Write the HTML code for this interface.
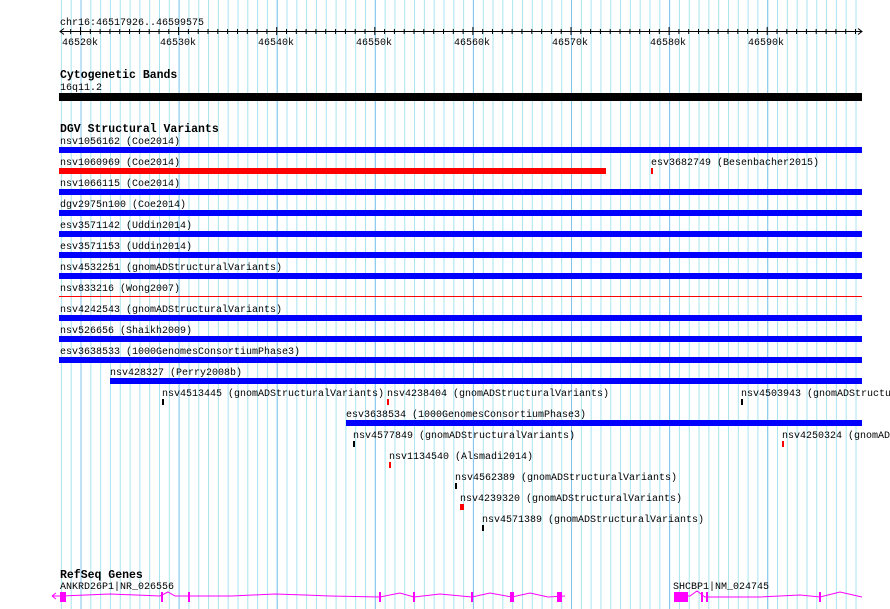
<!DOCTYPE html>
<html><head><meta charset="utf-8"><style>
html,body{margin:0;padding:0;background:#fff;width:890px;height:609px;overflow:hidden}
svg text{font-family:"Liberation Mono","DejaVu Sans Mono",monospace;font-size:10px;fill:#000}
svg text.h{font-weight:bold;font-size:11.5px}
</style></head><body>
<svg width="890" height="609" viewBox="0 0 890 609" xmlns="http://www.w3.org/2000/svg">
<defs>
<pattern id="mn" x="60.9" y="0" width="9.81" height="609" patternUnits="userSpaceOnUse">
<rect x="0" y="0" width="1" height="609" fill="#a8e4f0"/>
</pattern>
<pattern id="mj" x="80.5" y="0" width="98.1" height="609" patternUnits="userSpaceOnUse">
<rect x="0" y="0" width="1" height="609" fill="#80c4ec"/>
</pattern>
</defs>
<rect x="59" y="0" width="800" height="609" fill="url(#mn)"/>
<rect x="59" y="0" width="800" height="609" fill="url(#mj)"/>

<!-- ruler -->
<text x="60" y="25">chr16:46517926..46599575</text>
<line x1="60" y1="31.5" x2="862" y2="31.5" stroke="#000"/>
<path d="M64 28.5 L60 31.5 L64 34.5 M858 28.5 L862 31.5 L858 34.5" stroke="#000" fill="none"/>
<g stroke="#000">
<path d="M70.7 29v5M90.3 29v5M100.1 29v5M109.9 29v5M119.7 29v5M129.5 29v5M139.4 29v5M149.2 29v5M159 29v5M168.8 29v5M188.4 29v5M198.2 29v5M208 29v5M217.8 29v5M227.6 29v5M237.5 29v5M247.3 29v5M257.1 29v5M266.9 29v5M286.5 29v5M296.3 29v5M306.1 29v5M315.9 29v5M325.7 29v5M335.6 29v5M345.4 29v5M355.2 29v5M365 29v5M384.6 29v5M394.4 29v5M404.2 29v5M414 29v5M423.8 29v5M433.7 29v5M443.5 29v5M453.3 29v5M463.1 29v5M482.7 29v5M492.5 29v5M502.3 29v5M512.1 29v5M521.9 29v5M531.8 29v5M541.6 29v5M551.4 29v5M561.2 29v5M580.8 29v5M590.6 29v5M600.4 29v5M610.2 29v5M620 29v5M629.9 29v5M639.7 29v5M649.5 29v5M659.3 29v5M678.9 29v5M688.7 29v5M698.5 29v5M708.3 29v5M718.1 29v5M728 29v5M737.8 29v5M747.6 29v5M757.4 29v5M777 29v5M786.8 29v5M796.6 29v5M806.4 29v5M816.2 29v5M826.1 29v5M835.9 29v5M845.7 29v5M855.5 29v5"/>
<path d="M80.5 27v8M178.6 27v8M276.7 27v8M374.8 27v8M472.9 27v8M571 27v8M669.1 27v8M767.2 27v8"/>
</g>
<text x="62" y="45">46520k</text><text x="160" y="45">46530k</text><text x="258" y="45">46540k</text><text x="356" y="45">46550k</text><text x="454" y="45">46560k</text><text x="552" y="45">46570k</text><text x="650" y="45">46580k</text><text x="748" y="45">46590k</text>

<!-- cytobands -->
<text class="h" x="60" y="78">Cytogenetic Bands</text>
<text x="60" y="90">16q11.2</text>
<rect x="59" y="93" width="803" height="8" fill="#000"/>

<!-- DGV -->
<text class="h" x="60" y="132">DGV Structural Variants</text>
<text x="60" y="144">nsv1056162 (Coe2014)</text><rect x="59" y="147" width="803" height="6" fill="#0000ff"/>
<text x="60" y="165">nsv1060969 (Coe2014)</text><rect x="59" y="168" width="547" height="6" fill="#ff0000"/>
<text x="651" y="165">esv3682749 (Besenbacher2015)</text><rect x="651" y="168" width="2" height="6" fill="#ff0000"/>
<text x="60" y="186">nsv1066115 (Coe2014)</text><rect x="59" y="189" width="803" height="6" fill="#0000ff"/>
<text x="60" y="207">dgv2975n100 (Coe2014)</text><rect x="59" y="210" width="803" height="6" fill="#0000ff"/>
<text x="60" y="228">esv3571142 (Uddin2014)</text><rect x="59" y="231" width="803" height="6" fill="#0000ff"/>
<text x="60" y="249">esv3571153 (Uddin2014)</text><rect x="59" y="252" width="803" height="6" fill="#0000ff"/>
<text x="60" y="270">nsv4532251 (gnomADStructuralVariants)</text><rect x="59" y="273" width="803" height="6" fill="#0000ff"/>
<text x="60" y="291">nsv833216 (Wong2007)</text><rect x="59" y="296" width="803" height="1" fill="#ff0000"/>
<text x="60" y="312">nsv4242543 (gnomADStructuralVariants)</text><rect x="59" y="315" width="803" height="6" fill="#0000ff"/>
<text x="60" y="333">nsv526656 (Shaikh2009)</text><rect x="59" y="336" width="803" height="6" fill="#0000ff"/>
<text x="60" y="354">esv3638533 (1000GenomesConsortiumPhase3)</text><rect x="59" y="357" width="803" height="6" fill="#0000ff"/>
<text x="110" y="375">nsv428327 (Perry2008b)</text><rect x="110" y="378" width="752" height="6" fill="#0000ff"/>
<text x="162" y="396">nsv4513445 (gnomADStructuralVariants)</text><rect x="162" y="399" width="2" height="6" fill="#000"/>
<text x="387" y="396">nsv4238404 (gnomADStructuralVariants)</text><rect x="387" y="399" width="2" height="6" fill="#ff0000"/>
<text x="741" y="396">nsv4503943 (gnomADStructu</text><rect x="741" y="399" width="2" height="6" fill="#000"/>
<text x="346" y="417">esv3638534 (1000GenomesConsortiumPhase3)</text><rect x="346" y="420" width="516" height="6" fill="#0000ff"/>
<text x="353" y="438">nsv4577849 (gnomADStructuralVariants)</text><rect x="353" y="441" width="2" height="6" fill="#000"/>
<text x="782" y="438">nsv4250324 (gnomAD</text><rect x="782" y="441" width="2" height="6" fill="#ff0000"/>
<text x="389" y="459">nsv1134540 (Alsmadi2014)</text><rect x="389" y="462" width="2" height="6" fill="#ff0000"/>
<text x="455" y="480">nsv4562389 (gnomADStructuralVariants)</text><rect x="455" y="483" width="2" height="6" fill="#000"/>
<text x="460" y="501">nsv4239320 (gnomADStructuralVariants)</text><rect x="460" y="504" width="4" height="6" fill="#ff0000"/>
<text x="482" y="522">nsv4571389 (gnomADStructuralVariants)</text><rect x="482" y="525" width="2" height="6" fill="#000"/>

<!-- RefSeq -->
<text class="h" x="60" y="578">RefSeq Genes</text>
<text x="60" y="589">ANKRD26P1|NR_026556</text>
<text x="673" y="589">SHCBP1|NM_024745</text>
<g stroke="#ff00ff" fill="none">
<path d="M52 596 L56 593 M52 596 L56 599"/>
<path d="M52 596 H62 L110 594 L160 596 L168 592 L175 596 L190 596 L232 596 L275 594 L305 595 L330 596 L380 597 L400 593 L414 597 L440 594 L472 597 L490 593 L512 597 L530 593 L548 597 L565 596"/>
<path d="M674 596 L690 596 L697 591 L705 597 L760 597 L800 595 L820 597 L840 592 L862 597"/>
</g>
<g fill="#ff00ff">
<rect x="60" y="592" width="6" height="10"/>
<rect x="161" y="592" width="2" height="10"/><rect x="188" y="592" width="2" height="10"/>
<rect x="379" y="592" width="2" height="10"/><rect x="413" y="592" width="2" height="10"/>
<rect x="471" y="592" width="2" height="10"/><rect x="510" y="592" width="4" height="10"/>
<rect x="557" y="592" width="5" height="10"/>
<rect x="674" y="592" width="14" height="10"/>
<rect x="701" y="592" width="2" height="10"/><rect x="706" y="592" width="2" height="10"/>
<rect x="819" y="592" width="2" height="10"/>
</g>
</svg>
</body></html>
